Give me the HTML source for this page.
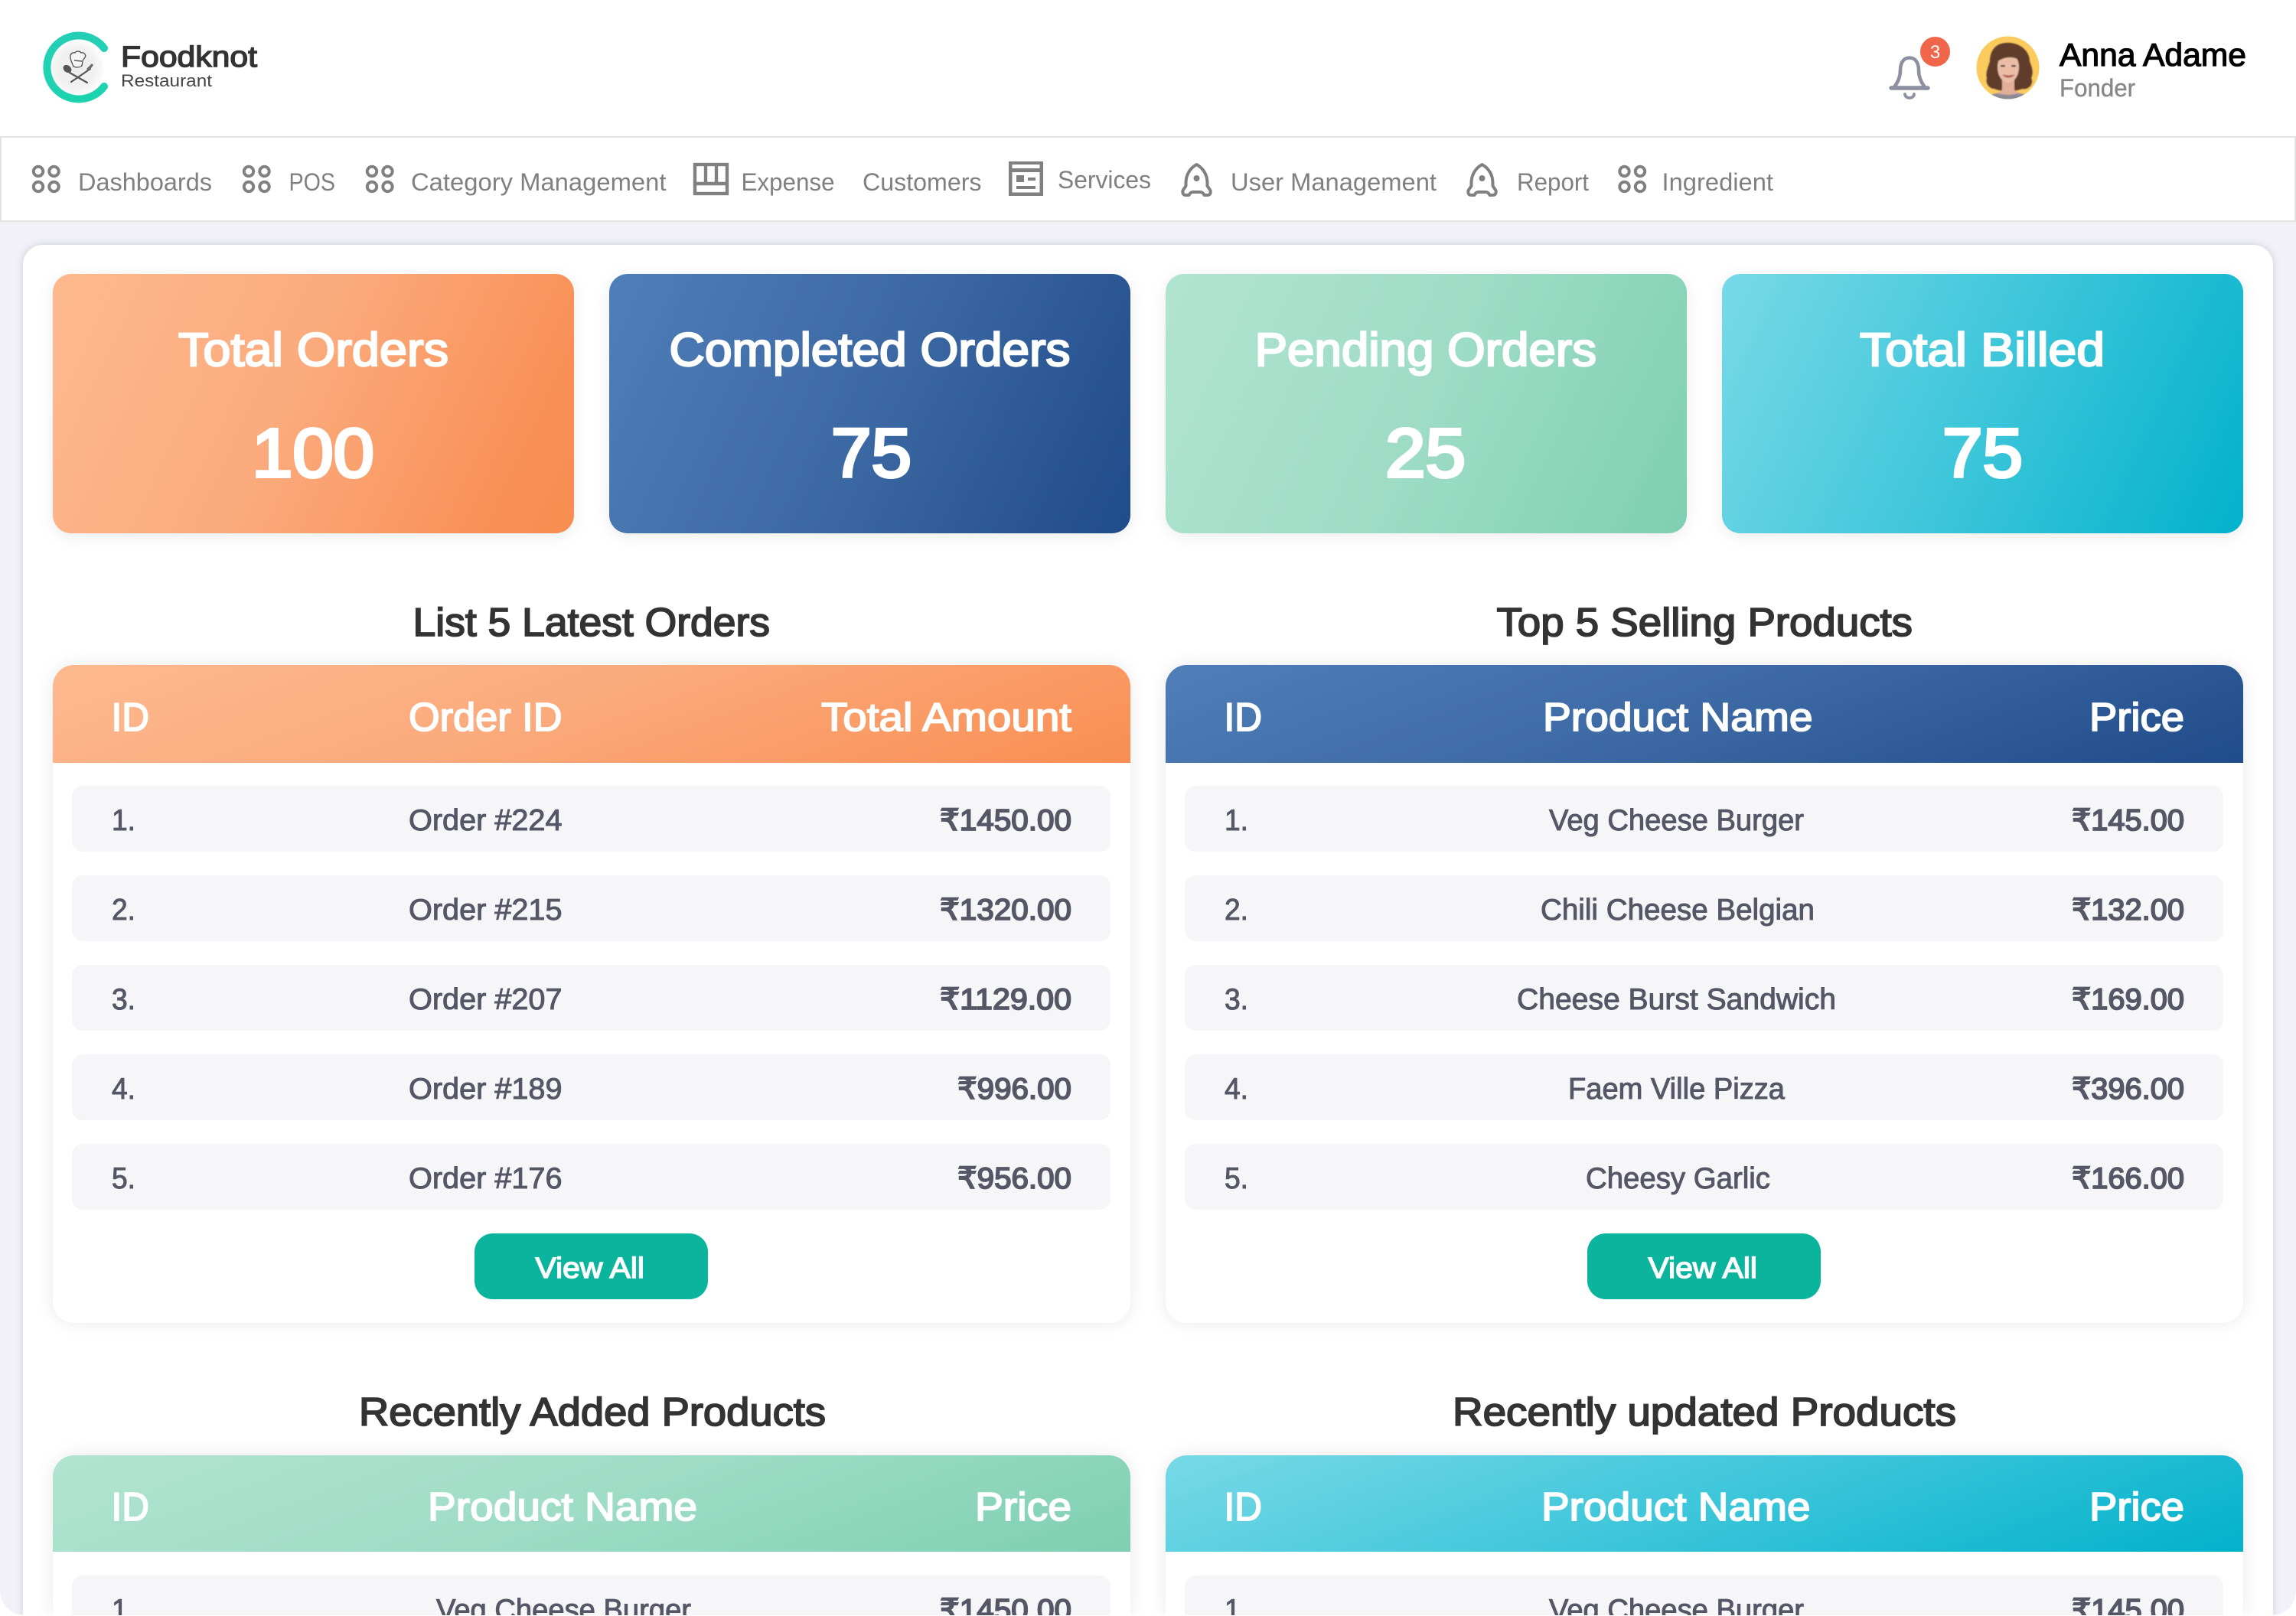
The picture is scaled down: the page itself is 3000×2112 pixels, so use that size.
<!DOCTYPE html>
<html lang="en">
<head>
<meta charset="utf-8">
<title>Foodknot Restaurant Dashboard</title>
<style>
html,body{margin:0;padding:0;background:#fff;width:3000px;height:2112px;overflow:hidden}
body{position:relative;font-family:"Liberation Sans",sans-serif}
#page{position:absolute;left:0;top:0;width:3000px;height:2111px;background:#f1f1f7;border-radius:0 0 32px 32px;overflow:hidden}
#top{position:absolute;left:0;top:0;width:3000px;height:178px;background:#fff}
#nav{position:absolute;left:0;top:178px;width:2996px;height:108px;background:#fff;border:2px solid #e4e4e4}
#main{position:absolute;left:30px;top:320px;width:2940px;height:1791px;background:#fff;border-radius:26px 26px 0 0;box-shadow:0 0 10px rgba(60,60,90,.2)}
.stat{position:absolute;top:358px;width:681px;height:339px;border-radius:24px;box-shadow:0 4px 22px rgba(0,0,0,.08)}
.panel{position:absolute;width:1408px;background:#fff;border-radius:28px;box-shadow:0 0 24px rgba(0,0,0,.09)}
.cut{border-radius:28px 28px 0 0}
.head{position:absolute;left:0;top:0;width:1408px;border-radius:28px 28px 0 0}
.row{position:absolute;width:1357px;height:86px;background:#f6f6f9;border-radius:14px}
.rowcut{height:52px;border-radius:14px 14px 0 0}
.btn{position:absolute;width:305px;height:86px;background:#0bb49c;border-radius:24px}
.o{background:linear-gradient(115deg,#feb98f 0%,#fbab7d 45%,#f98f55 88%,#f98e52 100%)}
.b{background:linear-gradient(115deg,#4f7eb9 0%,#3c69a3 50%,#1f4c8a 100%)}
.g{background:linear-gradient(115deg,#b1e4d1 0%,#9edcc6 50%,#7ed0b2 100%)}
.c{background:linear-gradient(115deg,#78d9e7 0%,#3ec6da 50%,#02b1cc 100%)}
.oh{background:linear-gradient(160deg,#feb98f 0%,#fbab7d 45%,#f98e52 100%)}
.bh{background:linear-gradient(160deg,#4f7eb9 0%,#3c69a3 50%,#1f4c8a 100%)}
.gh{background:linear-gradient(160deg,#b1e4d1 0%,#9edcc6 50%,#7ed0b2 100%)}
.ch{background:linear-gradient(160deg,#78d9e7 0%,#3ec6da 50%,#02b1cc 100%)}
svg{position:absolute;left:0;top:0;overflow:hidden}
text{font-family:"Liberation Sans","DejaVu Sans",sans-serif}
.t{font-size:61px;fill:#fff;stroke:#fff;stroke-width:2.4px}
.n{font-size:90px;fill:#fff;stroke:#fff;stroke-width:4px}
.h2{font-size:52px;fill:#333;stroke:#333;stroke-width:1.8px}
.th{font-size:52px;fill:#fff;stroke:#fff;stroke-width:1.8px}
.td{font-size:39px;fill:#555766;stroke:#555766;stroke-width:1px}
.am{font-size:39px;fill:#555766;stroke:#555766;stroke-width:1.8px}
.v{font-size:38px;fill:#fff;stroke:#fff;stroke-width:1.4px}
.nv{font-size:32px;fill:#808080}
</style>
</head>
<body>
<div id="page">
  <div id="top"></div>
  <div id="nav"></div>
  <div id="main"></div>

  <div class="stat o" style="left:69px"></div>
  <div class="stat b" style="left:796px"></div>
  <div class="stat g" style="left:1523px"></div>
  <div class="stat c" style="left:2250px"></div>

  <div class="panel" style="left:69px;top:869px;height:860px">
    <div class="head oh" style="height:128px"></div>
    <div class="row" style="left:25px;top:158px"></div>
    <div class="row" style="left:25px;top:275px"></div>
    <div class="row" style="left:25px;top:392px"></div>
    <div class="row" style="left:25px;top:509px"></div>
    <div class="row" style="left:25px;top:626px"></div>
    <div class="btn" style="left:551px;top:743px"></div>
  </div>
  <div class="panel" style="left:1523px;top:869px;height:860px">
    <div class="head bh" style="height:128px"></div>
    <div class="row" style="left:25px;top:158px"></div>
    <div class="row" style="left:25px;top:275px"></div>
    <div class="row" style="left:25px;top:392px"></div>
    <div class="row" style="left:25px;top:509px"></div>
    <div class="row" style="left:25px;top:626px"></div>
    <div class="btn" style="left:551px;top:743px"></div>
  </div>
  <div class="panel cut" style="left:69px;top:1902px;height:209px">
    <div class="head gh" style="height:126px"></div>
    <div class="row rowcut" style="left:25px;top:157px"></div>
  </div>
  <div class="panel cut" style="left:1523px;top:1902px;height:209px">
    <div class="head ch" style="height:126px"></div>
    <div class="row rowcut" style="left:25px;top:157px"></div>
  </div>

  <svg width="3000" height="2111" viewBox="0 0 3000 2111" xmlns="http://www.w3.org/2000/svg">
    <defs>
      <radialGradient id="disc" cx="50%" cy="50%" r="50%">
        <stop offset="0%" stop-color="#eeeeee"/><stop offset="70%" stop-color="#f1f1f1"/><stop offset="100%" stop-color="#fbfbfb"/>
      </radialGradient>
      <linearGradient id="ring" x1="0" y1="0" x2="0" y2="1">
        <stop offset="0%" stop-color="#25cfb6"/><stop offset="100%" stop-color="#1cd3b0"/>
      </linearGradient>
      <clipPath id="av"><circle cx="2623.5" cy="88.5" r="41"/></clipPath>
      <clipPath id="vp"><rect x="0" y="0" width="3000" height="2111"/></clipPath>
      <filter id="soft" x="-10%" y="-10%" width="120%" height="120%"><feGaussianBlur stdDeviation=".8"/></filter>
      <g id="four" fill="none" stroke="#808080" stroke-width="4">
        <circle cx="0" cy="0" r="6.2"/><circle cx="20.500" cy="0" r="6.2"/><circle cx="0" cy="20" r="6.2"/><circle cx="20.500" cy="20" r="6.2"/>
      </g>
      <g id="rocket" fill="none" stroke="#808080" stroke-width="4" stroke-linejoin="round">
        <path d="M0-20C-9-15-14-6-14 4L-14 8-18 14Q-19 20-14 20L-10 20Q-8 16-5 16L5 16Q8 16 10 20L14 20Q19 20 18 14L14 8 14 4C14-6 9-15 0-20Z"/>
        <circle cx="0" cy="-2" r="4" fill="#808080" stroke="none"/>
      </g>
    </defs>

    <!-- logo -->
    <circle cx="99" cy="89" r="36" fill="url(#disc)"/>
    <path d="M136 63A41.5 41.5 0 1 0 136 113" fill="none" stroke="url(#ring)" stroke-width="10" stroke-linecap="round"/>
    <g fill="none" stroke="#5a5a5a" stroke-width="1.4">
      <path d="M96 87C94 82 92 78 92 75C91 70 96 68 98 69C100 66 105 67 106 69C110 68 113 72 111 75C110 77 108 78 108 80L107 86C103 89 99 88 96 87Z" fill="#f6f6f6"/>
      <path d="M97 79L107 80"/>
    </g>
    <g stroke="#555" stroke-width="2.2" stroke-linecap="round">
      <path d="M91 95L114 108"/><path d="M118 90L93 107"/>
    </g>
    <ellipse cx="88" cy="90" rx="4.5" ry="6" transform="rotate(-50 88 90)" fill="#555"/>
    <path d="M113 90L120 83L122 85L116 93Z" fill="#6a6a6a"/>
    <text x="158" y="87" font-size="38" fill="#333" stroke="#333" stroke-width="1.4" textLength="178" lengthAdjust="spacingAndGlyphs">Foodknot</text>
    <text x="158" y="113" font-size="22" fill="#444" textLength="119" lengthAdjust="spacingAndGlyphs">Restaurant</text>

    <!-- bell -->
    <path d="M2475 114C2481 106 2483 99 2483 92C2483 81 2488 75.500 2495 75.500C2502 75.500 2507 81 2507 92C2507 99 2509 106 2515 114" fill="none" stroke="#8c90a0" stroke-width="4.6"/>
    <path d="M2471 115H2519" stroke="#8c90a0" stroke-width="5.4" stroke-linecap="round"/>
    <path d="M2489 123A6 5 0 0 0 2501 123" fill="none" stroke="#8c90a0" stroke-width="3.8" stroke-linecap="round"/>
    <circle cx="2528.500" cy="67.500" r="19.500" fill="#f0664a"/>
    <text x="2528.500" y="76" font-size="24" fill="#fff" text-anchor="middle">3</text>

    <!-- avatar -->
    <g clip-path="url(#av)">
      <rect x="2580" y="45" width="90" height="90" fill="#fccb5e"/>
      <g filter="url(#soft)">
        <path d="M2622 56C2608 56 2600 66 2600 80C2598 88 2594 94 2596 102C2594 110 2600 116 2606 116C2614 120 2634 120 2642 116C2650 118 2658 110 2654 102C2658 94 2654 86 2652 80C2652 66 2638 55 2622 56Z" fill="#5f3d29"/>
        <path d="M2616 100H2632V118L2646 125V135H2602V125L2616 118Z" fill="#e3ae96"/>
        <path d="M2600 125C2608 120 2612 123 2624 124C2636 123 2640 120 2648 125V135H2600Z" fill="#8b8b97"/>
        <ellipse cx="2624" cy="88" rx="14" ry="20" fill="#ebbda7"/>
        <path d="M2608 82C2610 72 2618 67 2628 67C2634 68 2638 72 2640 80C2634 74 2620 72 2608 82Z" fill="#5f3d29"/>
        <rect x="2614" y="85" width="6" height="2.400" rx="1" fill="#5a3d32"/>
        <rect x="2628" y="85" width="6" height="2.400" rx="1" fill="#5a3d32"/>
        <path d="M2617 98Q2624 104 2632 98Q2624 100 2617 98Z" fill="#b1564f" stroke="#b1564f" stroke-width="1"/>
      </g>
    </g>
    <text x="2691" y="86" font-size="42" fill="#000" stroke="#000" stroke-width="1.2" textLength="244" lengthAdjust="spacingAndGlyphs">Anna Adame</text>
    <text x="2691" y="126" font-size="32" fill="#888" stroke="#888" stroke-width=".4" textLength="99" lengthAdjust="spacingAndGlyphs">Fonder</text>

    <!-- nav icons -->
    <use href="#four" x="50" y="224"/>
    <use href="#four" x="325" y="224"/>
    <use href="#four" x="486" y="224"/>
    <use href="#four" x="2122.500" y="224"/>
    <g fill="none" stroke="#808080" stroke-width="4.400">
      <rect x="908" y="215" width="42" height="38"/>
      <path d="M908 240H950M922 215V240M936 215V240"/>
    </g>
    <g fill="#808080">
      <path fill-rule="evenodd" d="M1318 211H1363V256H1318ZM1322.500 215V220H1358.500V215ZM1322.500 225V251.500H1358.500V225Z"/>
      <rect x="1328" y="229" width="10" height="9"/>
      <rect x="1343" y="232" width="10" height="4"/>
      <rect x="1328" y="243" width="25" height="4"/>
    </g>
    <use href="#rocket" x="1563.500" y="235"/>
    <use href="#rocket" x="1936.500" y="235"/>

    <!-- nav text -->
    <text class="nv" x="102" y="249" textLength="175" lengthAdjust="spacingAndGlyphs">Dashboards</text>
    <text class="nv" x="377.500" y="249" textLength="60.500" lengthAdjust="spacingAndGlyphs">POS</text>
    <text class="nv" x="537" y="249" textLength="333.500" lengthAdjust="spacingAndGlyphs">Category Management</text>
    <text class="nv" x="968.500" y="249" textLength="122" lengthAdjust="spacingAndGlyphs">Expense</text>
    <text class="nv" x="1127" y="249" textLength="155.500" lengthAdjust="spacingAndGlyphs">Customers</text>
    <text class="nv" x="1382" y="246" textLength="122" lengthAdjust="spacingAndGlyphs">Services</text>
    <text class="nv" x="1608" y="249" textLength="269" lengthAdjust="spacingAndGlyphs">User Management</text>
    <text class="nv" x="1982" y="249" textLength="94" lengthAdjust="spacingAndGlyphs">Report</text>
    <text class="nv" x="2171.500" y="249" textLength="145.500" lengthAdjust="spacingAndGlyphs">Ingredient</text>

    <!-- stats -->
    <text class="t" x="233" y="478" textLength="353" lengthAdjust="spacingAndGlyphs">Total Orders</text>
    <text class="n" x="329" y="623" textLength="160" lengthAdjust="spacingAndGlyphs">100</text>
    <text class="t" x="874.500" y="478" textLength="524" lengthAdjust="spacingAndGlyphs">Completed Orders</text>
    <text class="n" x="1086" y="623" textLength="105" lengthAdjust="spacingAndGlyphs">75</text>
    <text class="t" x="1639.500" y="478" textLength="446.500" lengthAdjust="spacingAndGlyphs">Pending Orders</text>
    <text class="n" x="1810" y="623" textLength="105" lengthAdjust="spacingAndGlyphs">25</text>
    <text class="t" x="2430" y="478" textLength="320" lengthAdjust="spacingAndGlyphs">Total Billed</text>
    <text class="n" x="2538" y="623" textLength="105" lengthAdjust="spacingAndGlyphs">75</text>

    <!-- section titles -->
    <text class="h2" x="539.500" y="831" textLength="466.500" lengthAdjust="spacingAndGlyphs">List 5 Latest Orders</text>
    <text class="h2" x="1955.500" y="831" textLength="543.500" lengthAdjust="spacingAndGlyphs">Top 5 Selling Products</text>
    <text class="h2" x="469" y="1863" textLength="610" lengthAdjust="spacingAndGlyphs">Recently Added Products</text>
    <text class="h2" x="1898" y="1863" textLength="658" lengthAdjust="spacingAndGlyphs">Recently updated Products</text>

    <!-- table headers -->
    <text class="th" x="145.500" y="955" textLength="49.500" lengthAdjust="spacingAndGlyphs">ID</text>
    <text class="th" x="534" y="955" textLength="200.500" lengthAdjust="spacingAndGlyphs">Order ID</text>
    <text class="th" x="1073" y="955" textLength="327" lengthAdjust="spacingAndGlyphs">Total Amount</text>
    <text class="th" x="1599.500" y="955" textLength="49.500" lengthAdjust="spacingAndGlyphs">ID</text>
    <text class="th" x="2016" y="955" textLength="352.500" lengthAdjust="spacingAndGlyphs">Product Name</text>
    <text class="th" x="2730" y="955" textLength="124" lengthAdjust="spacingAndGlyphs">Price</text>
    <text class="th" x="145.500" y="1987" textLength="49.500" lengthAdjust="spacingAndGlyphs">ID</text>
    <text class="th" x="559" y="1987" textLength="352" lengthAdjust="spacingAndGlyphs">Product Name</text>
    <text class="th" x="1274" y="1987" textLength="126" lengthAdjust="spacingAndGlyphs">Price</text>
    <text class="th" x="1599.500" y="1987" textLength="49.500" lengthAdjust="spacingAndGlyphs">ID</text>
    <text class="th" x="2014" y="1987" textLength="351.500" lengthAdjust="spacingAndGlyphs">Product Name</text>
    <text class="th" x="2730" y="1987" textLength="124" lengthAdjust="spacingAndGlyphs">Price</text>

    <!-- left table 1 -->
    <text class="td" x="146" y="1085" textLength="31" lengthAdjust="spacingAndGlyphs">1.</text>
    <text class="td" x="534" y="1085" textLength="200.500" lengthAdjust="spacingAndGlyphs">Order #224</text>
    <text class="am" x="1228" y="1085" textLength="172" lengthAdjust="spacingAndGlyphs">₹1450.00</text>
    <text class="td" x="146" y="1202" textLength="31" lengthAdjust="spacingAndGlyphs">2.</text>
    <text class="td" x="534" y="1202" textLength="200.500" lengthAdjust="spacingAndGlyphs">Order #215</text>
    <text class="am" x="1228" y="1202" textLength="172" lengthAdjust="spacingAndGlyphs">₹1320.00</text>
    <text class="td" x="146" y="1319" textLength="31" lengthAdjust="spacingAndGlyphs">3.</text>
    <text class="td" x="534" y="1319" textLength="200.500" lengthAdjust="spacingAndGlyphs">Order #207</text>
    <text class="am" x="1228" y="1319" textLength="172" lengthAdjust="spacingAndGlyphs">₹1129.00</text>
    <text class="td" x="146" y="1436" textLength="31" lengthAdjust="spacingAndGlyphs">4.</text>
    <text class="td" x="534" y="1436" textLength="200.500" lengthAdjust="spacingAndGlyphs">Order #189</text>
    <text class="am" x="1251" y="1436" textLength="149" lengthAdjust="spacingAndGlyphs">₹996.00</text>
    <text class="td" x="146" y="1553" textLength="31" lengthAdjust="spacingAndGlyphs">5.</text>
    <text class="td" x="534" y="1553" textLength="200.500" lengthAdjust="spacingAndGlyphs">Order #176</text>
    <text class="am" x="1251" y="1553" textLength="149" lengthAdjust="spacingAndGlyphs">₹956.00</text>
    <text class="v" x="699.500" y="1670" textLength="142.500" lengthAdjust="spacingAndGlyphs">View All</text>

    <!-- right table 1 -->
    <text class="td" x="1600" y="1085" textLength="31" lengthAdjust="spacingAndGlyphs">1.</text>
    <text class="td" x="2024" y="1085" textLength="333" lengthAdjust="spacingAndGlyphs">Veg Cheese Burger</text>
    <text class="am" x="2707" y="1085" textLength="147" lengthAdjust="spacingAndGlyphs">₹145.00</text>
    <text class="td" x="1600" y="1202" textLength="31" lengthAdjust="spacingAndGlyphs">2.</text>
    <text class="td" x="2013" y="1202" textLength="358" lengthAdjust="spacingAndGlyphs">Chili Cheese Belgian</text>
    <text class="am" x="2707" y="1202" textLength="147" lengthAdjust="spacingAndGlyphs">₹132.00</text>
    <text class="td" x="1600" y="1319" textLength="31" lengthAdjust="spacingAndGlyphs">3.</text>
    <text class="td" x="1982" y="1319" textLength="417" lengthAdjust="spacingAndGlyphs">Cheese Burst Sandwich</text>
    <text class="am" x="2707" y="1319" textLength="147" lengthAdjust="spacingAndGlyphs">₹169.00</text>
    <text class="td" x="1600" y="1436" textLength="31" lengthAdjust="spacingAndGlyphs">4.</text>
    <text class="td" x="2049" y="1436" textLength="283" lengthAdjust="spacingAndGlyphs">Faem Ville Pizza</text>
    <text class="am" x="2707" y="1436" textLength="147" lengthAdjust="spacingAndGlyphs">₹396.00</text>
    <text class="td" x="1600" y="1553" textLength="31" lengthAdjust="spacingAndGlyphs">5.</text>
    <text class="td" x="2072" y="1553" textLength="241" lengthAdjust="spacingAndGlyphs">Cheesy Garlic</text>
    <text class="am" x="2707" y="1553" textLength="147" lengthAdjust="spacingAndGlyphs">₹166.00</text>
    <text class="v" x="2153.500" y="1670" textLength="142.500" lengthAdjust="spacingAndGlyphs">View All</text>

    <!-- bottom rows -->
    <g clip-path="url(#vp)">
    <text class="td" x="146" y="2117" textLength="31" lengthAdjust="spacingAndGlyphs">1.</text>
    <text class="td" x="570" y="2117" textLength="333" lengthAdjust="spacingAndGlyphs">Veg Cheese Burger</text>
    <text class="am" x="1228" y="2117" textLength="172" lengthAdjust="spacingAndGlyphs">₹1450.00</text>
    <text class="td" x="1600" y="2117" textLength="31" lengthAdjust="spacingAndGlyphs">1.</text>
    <text class="td" x="2024" y="2117" textLength="333" lengthAdjust="spacingAndGlyphs">Veg Cheese Burger</text>
    <text class="am" x="2707" y="2117" textLength="147" lengthAdjust="spacingAndGlyphs">₹145.00</text>
    </g>
  </svg>
</div>
</body>
</html>
